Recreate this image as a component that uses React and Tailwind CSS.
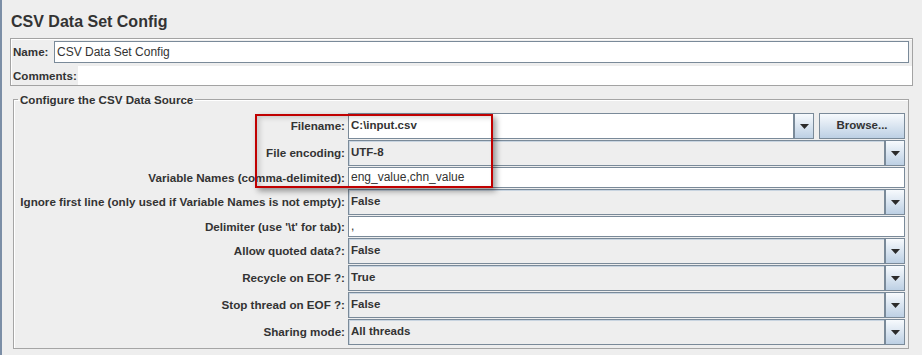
const rows = [
  { label: "Filename:", value: "C:\\input.csv", type: "file" },
  { label: "File encoding:", value: "UTF-8", type: "combo" },
  { label: "Variable Names (comma-delimited):", value: "eng_value,chn_value", type: "text" },
  { label: "Ignore first line (only used if Variable Names is not empty):", value: "False", type: "combo" },
  { label: "Delimiter (use '\\t' for tab):", value: ",", type: "text" },
  { label: "Allow quoted data?:", value: "False", type: "combo" },
  { label: "Recycle on EOF ?:", value: "True", type: "combo" },
  { label: "Stop thread on EOF ?:", value: "False", type: "combo" },
  { label: "Sharing mode:", value: "All threads", type: "combo" },
];

function ArrowButton() {
  return (
    <div className="flex w-[20px] shrink-0 items-center justify-center border border-[#7a8a99] bg-linear-to-b from-[#f7fafd] to-[#bdd0e4]">
      <svg width="9" height="5" viewBox="0 0 9 5">
        <path d="M0 0h9L4.5 5z" fill="#2b2b2b" />
      </svg>
    </div>
  );
}

function Combo({ value }) {
  return (
    <div className="flex h-[26px]">
      <div className="flex flex-1 items-center border border-[#7a8a99] bg-[#eeeeee] pl-[2px] text-[11.5px] font-bold shadow-[inset_1px_1px_0_#c8d4e0]">
        {value}
      </div>
      <ArrowButton />
    </div>
  );
}

function FileRow({ value }) {
  return (
    <div className="flex h-[26px]">
      <div className="flex flex-1 items-center border border-[#7a8a99] bg-white pl-[2px] text-[11.5px] font-bold">
        {value}
      </div>
      <ArrowButton />
      <button className="ml-[5px] w-[86px] border border-[#7a8a99] bg-linear-to-b from-[#f7fafd] to-[#bdd0e4] text-[11.5px] font-bold">
        Browse...
      </button>
    </div>
  );
}

function TextRow({ value }) {
  return (
    <div className="flex h-[21px] items-center border border-[#7a8a99] bg-white pl-[2px] leading-[14px]">
      <span className="-mt-[2px]">{value}</span>
    </div>
  );
}

export default function App() {
  return (
    <div className="relative h-[355px] w-[922px] overflow-hidden border-l-2 border-[#7b8ea6] bg-[#eeeeee] font-['Liberation_Sans',Arial,sans-serif] text-[12px] text-[#333333]">
      <h1 className="pl-[9px] pt-[12px] text-[16px] font-bold leading-[19px]">CSV Data Set Config</h1>

      <div className="ml-[8px] mt-[7px] h-[48px] w-[903px] border border-[#a3a3a3] pt-[2px] shadow-[inset_1px_1px_0_#ffffff]">
        <div className="flex h-[22px] items-center pl-[2px]">
          <span className="w-[41px] text-[11.6px] font-bold">Name:</span>
          <div className="flex h-[22px] w-[855px] items-center border border-[#7a8a99] bg-white pl-[2px]">
            CSV Data Set Config
          </div>
        </div>
        <div className="mt-[3px] flex h-[19px] items-center pl-[2px]">
          <span className="w-[65px] text-[11.6px] font-bold">Comments:</span>
          <div className="h-full flex-1 bg-white" />
        </div>
      </div>

      <fieldset className="ml-[11px] mt-[6px] w-[896px] border border-[#a5a5a5] pb-[3px] pt-[6px] shadow-[inset_1px_1px_0_#ffffff]">
        <legend className="ml-[4px] px-[2px] text-[11.6px] font-bold leading-[15px]">Configure the CSV Data Source</legend>
        <div className="grid grid-cols-[334px_557px] gap-y-[1px]">
          {rows.map((r) => (
            <div key={r.label} className="contents">
              <div className="flex items-center justify-end whitespace-nowrap pr-[3px] text-[11.65px] font-bold">{r.label}</div>
              {r.type === "file" && <FileRow value={r.value} />}
              {r.type === "combo" && <Combo value={r.value} />}
              {r.type === "text" && <TextRow value={r.value} />}
            </div>
          ))}
        </div>
      </fieldset>

      <div className="absolute left-[253px] top-[114px] h-[74px] w-[238px] border-2 border-[#c00000] shadow-[3px_3px_6px_rgba(0,0,0,0.4),inset_3px_2px_5px_rgba(0,0,0,0.15)]" />
    </div>
  );
}
